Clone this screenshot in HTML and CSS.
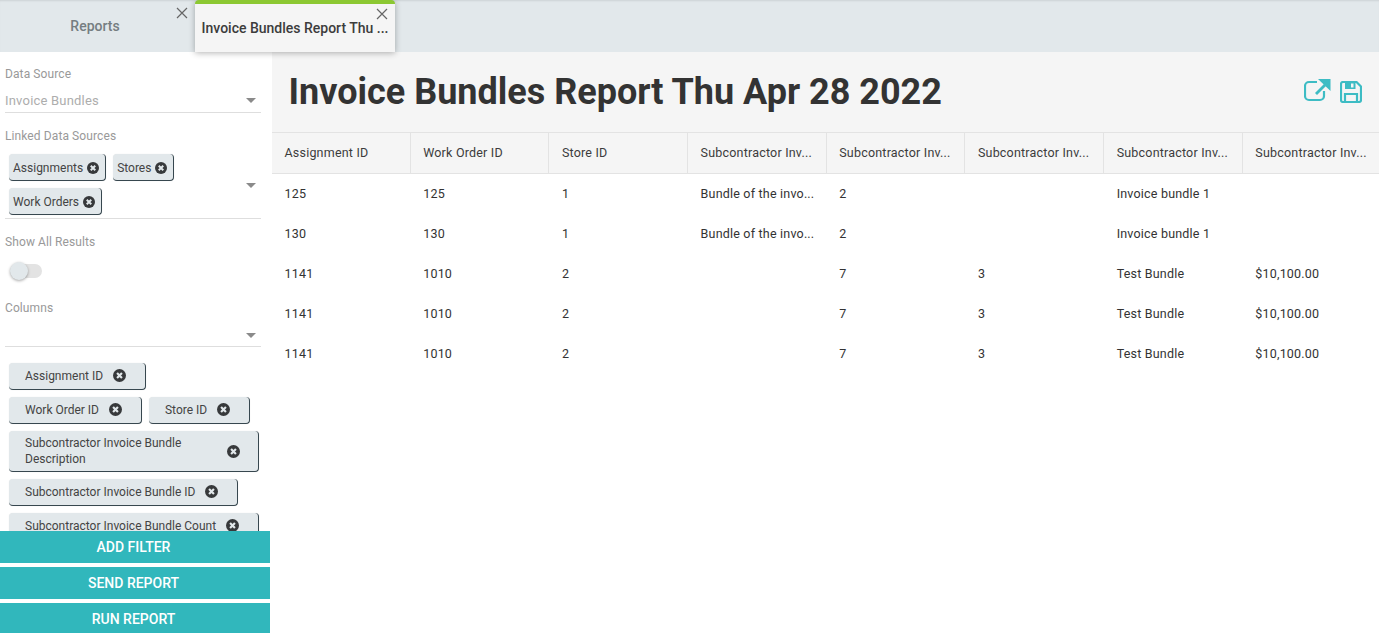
FILE: index.html
```html
<!DOCTYPE html>
<html lang="en">
<head>
<meta charset="utf-8">
<title>Invoice Bundles Report</title>
<link rel="stylesheet" href="styles.css">
</head>
<body>
<div class="app">
  <header class="tabbar">
    <div class="tab">
      <span class="tab-label">Reports</span>
      <svg class="tab-close" viewBox="0 0 12 12"><path d="M1 1l10 10M11 1L1 11"/></svg>
    </div>
    <div class="tab tab-active">
      <span class="tab-label">Invoice Bundles Report Thu ...</span>
      <svg class="tab-close" viewBox="0 0 12 12"><path d="M1 1l10 10M11 1L1 11"/></svg>
    </div>
  </header>
  <div class="main">
    <aside class="sidebar">
      <div class="form">
        <div class="field-label">Data Source</div>
        <div class="select select-source"><span class="select-value">Invoice Bundles</span><i class="caret"></i></div>
        <div class="field-label label-linked">Linked Data Sources</div>
        <div class="select select-linked">
          <div class="chips chips-linked">
            <span class="chip chip-small">Assignments<svg class="x" viewBox="0 0 24 24"><circle cx="12" cy="12" r="12"/><path d="M7.500 7.500l9 9M16.500 7.500l-9 9"/></svg></span>
            <span class="chip chip-small">Stores<svg class="x" viewBox="0 0 24 24"><circle cx="12" cy="12" r="12"/><path d="M7.500 7.500l9 9M16.500 7.500l-9 9"/></svg></span>
            <span class="chip chip-small">Work Orders<svg class="x" viewBox="0 0 24 24"><circle cx="12" cy="12" r="12"/><path d="M7.500 7.500l9 9M16.500 7.500l-9 9"/></svg></span>
          </div>
          <i class="caret"></i>
        </div>
        <div class="field-label label-show">Show All Results</div>
        <div class="toggle"><span class="knob"></span></div>
        <div class="field-label label-columns">Columns</div>
        <div class="select select-columns"><i class="caret"></i></div>
        <div class="chips chips-columns">
          <span class="chip">Assignment ID<svg class="x" viewBox="0 0 24 24"><circle cx="12" cy="12" r="12"/><path d="M7.500 7.500l9 9M16.500 7.500l-9 9"/></svg></span>
          <span class="chip">Work Order ID<svg class="x" viewBox="0 0 24 24"><circle cx="12" cy="12" r="12"/><path d="M7.500 7.500l9 9M16.500 7.500l-9 9"/></svg></span>
          <span class="chip">Store ID<svg class="x" viewBox="0 0 24 24"><circle cx="12" cy="12" r="12"/><path d="M7.500 7.500l9 9M16.500 7.500l-9 9"/></svg></span>
          <span class="chip chip-wide"><span class="chip-text">Subcontractor Invoice Bundle Description</span><svg class="x" viewBox="0 0 24 24"><circle cx="12" cy="12" r="12"/><path d="M7.500 7.500l9 9M16.500 7.500l-9 9"/></svg></span>
          <span class="chip">Subcontractor Invoice Bundle ID<svg class="x" viewBox="0 0 24 24"><circle cx="12" cy="12" r="12"/><path d="M7.500 7.500l9 9M16.500 7.500l-9 9"/></svg></span>
          <span class="chip">Subcontractor Invoice Bundle Count<svg class="x" viewBox="0 0 24 24"><circle cx="12" cy="12" r="12"/><path d="M7.500 7.500l9 9M16.500 7.500l-9 9"/></svg></span>
        </div>
      </div>
      <div class="actions">
        <button class="action">ADD FILTER</button>
        <button class="action">SEND REPORT</button>
        <button class="action">RUN REPORT</button>
      </div>
    </aside>
    <section class="content">
      <div class="title-row">
        <h1 class="title">Invoice Bundles Report Thu Apr 28 2022</h1>
        <div class="title-icons">
          <svg class="icon-open" viewBox="0 0 27 24"><path class="st" d="M13 4H5a4 4 0 0 0-4 4v10a4 4 0 0 0 4 4h11a4 4 0 0 0 4-4v-5"/><path class="fl" d="M14 1h12.500v12z"/><path class="st st-thick" d="M12 16l9-9"/></svg>
          <svg class="icon-save" viewBox="0 0 22 22"><path class="st" d="M3 1h13.500L21 5.500V19a2 2 0 0 1-2 2H3a2 2 0 0 1-2-2V3a2 2 0 0 1 2-2z"/><path class="fl" fill-rule="evenodd" d="M5 1h10.500v7H5zM11 2.500v4h2.500v-4z"/><path class="st" d="M5 21v-8h12v8"/></svg>
        </div>
      </div>
      <div class="table">
        <div class="row head">
          <div>Assignment ID</div><div>Work Order ID</div><div>Store ID</div><div>Subcontractor Inv...</div><div>Subcontractor Inv...</div><div>Subcontractor Inv...</div><div>Subcontractor Inv...</div><div>Subcontractor Inv...</div>
        </div>
        <div class="row"><div>125</div><div>125</div><div>1</div><div>Bundle of the invo...</div><div>2</div><div></div><div>Invoice bundle 1</div><div></div></div>
        <div class="row"><div>130</div><div>130</div><div>1</div><div>Bundle of the invo...</div><div>2</div><div></div><div>Invoice bundle 1</div><div></div></div>
        <div class="row"><div>1141</div><div>1010</div><div>2</div><div></div><div>7</div><div>3</div><div>Test Bundle</div><div>$10,100.00</div></div>
        <div class="row"><div>1141</div><div>1010</div><div>2</div><div></div><div>7</div><div>3</div><div>Test Bundle</div><div>$10,100.00</div></div>
        <div class="row"><div>1141</div><div>1010</div><div>2</div><div></div><div>7</div><div>3</div><div>Test Bundle</div><div>$10,100.00</div></div>
      </div>
    </section>
  </div>
</div>
</body>
</html>
```
FILE: styles.css
```css
* { box-sizing: border-box; }
html, body { margin: 0; height: 100%; overflow: hidden; background: #fff; }
body { font-family: Roboto, "Liberation Sans", sans-serif; color: #333; }
.app { height: 633px; display: flex; flex-direction: column; }

.tabbar { height: 52px; flex: none; display: flex; align-items: flex-start; background: #e2e8eb; box-shadow: inset 0 2px 2px -1px #ccd2d5; position: relative; z-index: 2; }
.tab { position: relative; width: 190px; height: 52px; margin-right: 5px; display: flex; justify-content: center; align-items: center; }
.tab-label { font-size: 14px; font-weight: 500; color: #757d81; position: relative; }
.tab-close { position: absolute; right: 2px; top: 7px; width: 12px; height: 12px; fill: none; stroke: #666; stroke-width: 1.2; }
.tab-active { width: 200px; margin-right: 0; background: #f5f5f5; border-top: 4px solid #8cc832; border-radius: 4px 4px 0 0; box-shadow: 0 1px 6px rgba(0,0,0,.3); }
.tab-active .tab-label { color: #3c3c3c; white-space: nowrap; }
.tab-active .tab-close { right: 7px; top: 4px; }

.main { flex: 1; display: flex; min-height: 0; }
.sidebar { width: 272px; flex: none; display: flex; flex-direction: column; min-height: 0; }
.form { height: 479px; flex: none; overflow: hidden; padding: 15px 11px 0 5px; }
.field-label { font-size: 12px; line-height: 14px; color: #999; letter-spacing: .1px; }
.select { position: relative; border-bottom: 1px solid #dedede; }
.select-source { height: 32px; padding-top: 12px; }
.select-value { font-size: 13px; line-height: 16px; color: #adadad; letter-spacing: .2px; display: block; }
.caret { position: absolute; right: 5px; width: 0; height: 0; border-left: 5px solid transparent; border-right: 5px solid transparent; border-top: 5px solid #8a8a8a; }
.select-source .caret { top: 17px; }
.label-linked { margin-top: 16px; }
.select-linked { height: 70px; margin-top: 6px; }
.select-linked .caret { top: 34px; }
.chips { display: flex; flex-wrap: wrap; align-items: flex-start; }
.chips-linked { padding: 5px 70px 0 4px; gap: 7px; }
.chip { display: inline-flex; align-items: center; background: #e2e8eb; border-radius: 4px; font-size: 12px; line-height: 16px; color: #444; padding: 4px 19px 5px 16px; border-right: 1px solid #37474f; border-bottom: 1px solid #37474f; min-height: 27px; box-shadow: 0 0 1px rgba(0,0,0,.12); }
.chip-small { padding: 5px 6px 4px 4px; }
.x { width: 13px; height: 13px; margin-left: 10px; flex: none; fill: #37393b; stroke: none; }
.x path { fill: none; stroke: #e2e8eb; stroke-width: 4; }
.chip-small .x { width: 12px; height: 12px; margin-left: 4px; }
.label-show { margin-top: 16px; }
.toggle { width: 32px; height: 14px; margin: 15px 0 0 5px; background: #e3e3e3; border-radius: 7px; position: relative; }
.knob { position: absolute; left: 0; top: -2px; width: 18px; height: 18px; border-radius: 50%; background: #e2e8eb; box-shadow: 0 1px 3px rgba(0,0,0,.35); }
.label-columns { margin-top: 23px; }
.select-columns { height: 32px; }
.select-columns .caret { top: 18px; }
.chips-columns { padding: 16px 0 0 4px; gap: 7px; width: 256px; }
.chip-wide { width: 250px; padding: 4px 18px 4px 16px; justify-content: space-between; }
.chip-text { width: 170px; }

.actions { display: flex; flex-direction: column; gap: 4px; width: 270px; height: 102px; overflow: hidden; flex: none; }
.action { height: 32px; flex: none; border: 0; background: #31b7bc; color: #fff; font: 500 14px Roboto, sans-serif; border-radius: 0; padding: 0 3px 0 0; }

.content { flex: 1; min-width: 0; overflow: hidden; }
.title-row { height: 81px; background: #f5f5f5; display: flex; align-items: center; justify-content: space-between; padding: 0 17px 0 16.500px; border-bottom: 1px solid #e3e3e3; }
.title { margin: 0; font-size: 36px; font-weight: 700; color: #333; white-space: nowrap; line-height: 42px; }
.title-icons { display: flex; align-items: flex-start; gap: 9px; margin-bottom: 3px; }
.st { fill: none; stroke: #3dbcc4; stroke-width: 2.2; }
.st-thick { stroke-width: 2.8; }
.fl { fill: #3dbcc4; }
.icon-open { width: 27px; height: 24px; }
.icon-save { width: 22px; height: 22px; margin-top: 3px; }

.table { width: 1109.600px; }
.row { display: grid; grid-template-columns: repeat(8, 138.7px); height: 40px; font-size: 12.500px; color: #333; }
.row > div { padding: 0 12.500px 2px; white-space: nowrap; overflow: hidden; letter-spacing: .2px; height: 100%; display: flex; align-items: center; }
.head { height: 41px; background: #f5f5f5; border-bottom: 1px solid #e3e3e3; }
.head > div { border-right: 1px solid #e3e3e3; color: #3c3c3c; }
.head > div:last-child { border-right: 0; }
```
